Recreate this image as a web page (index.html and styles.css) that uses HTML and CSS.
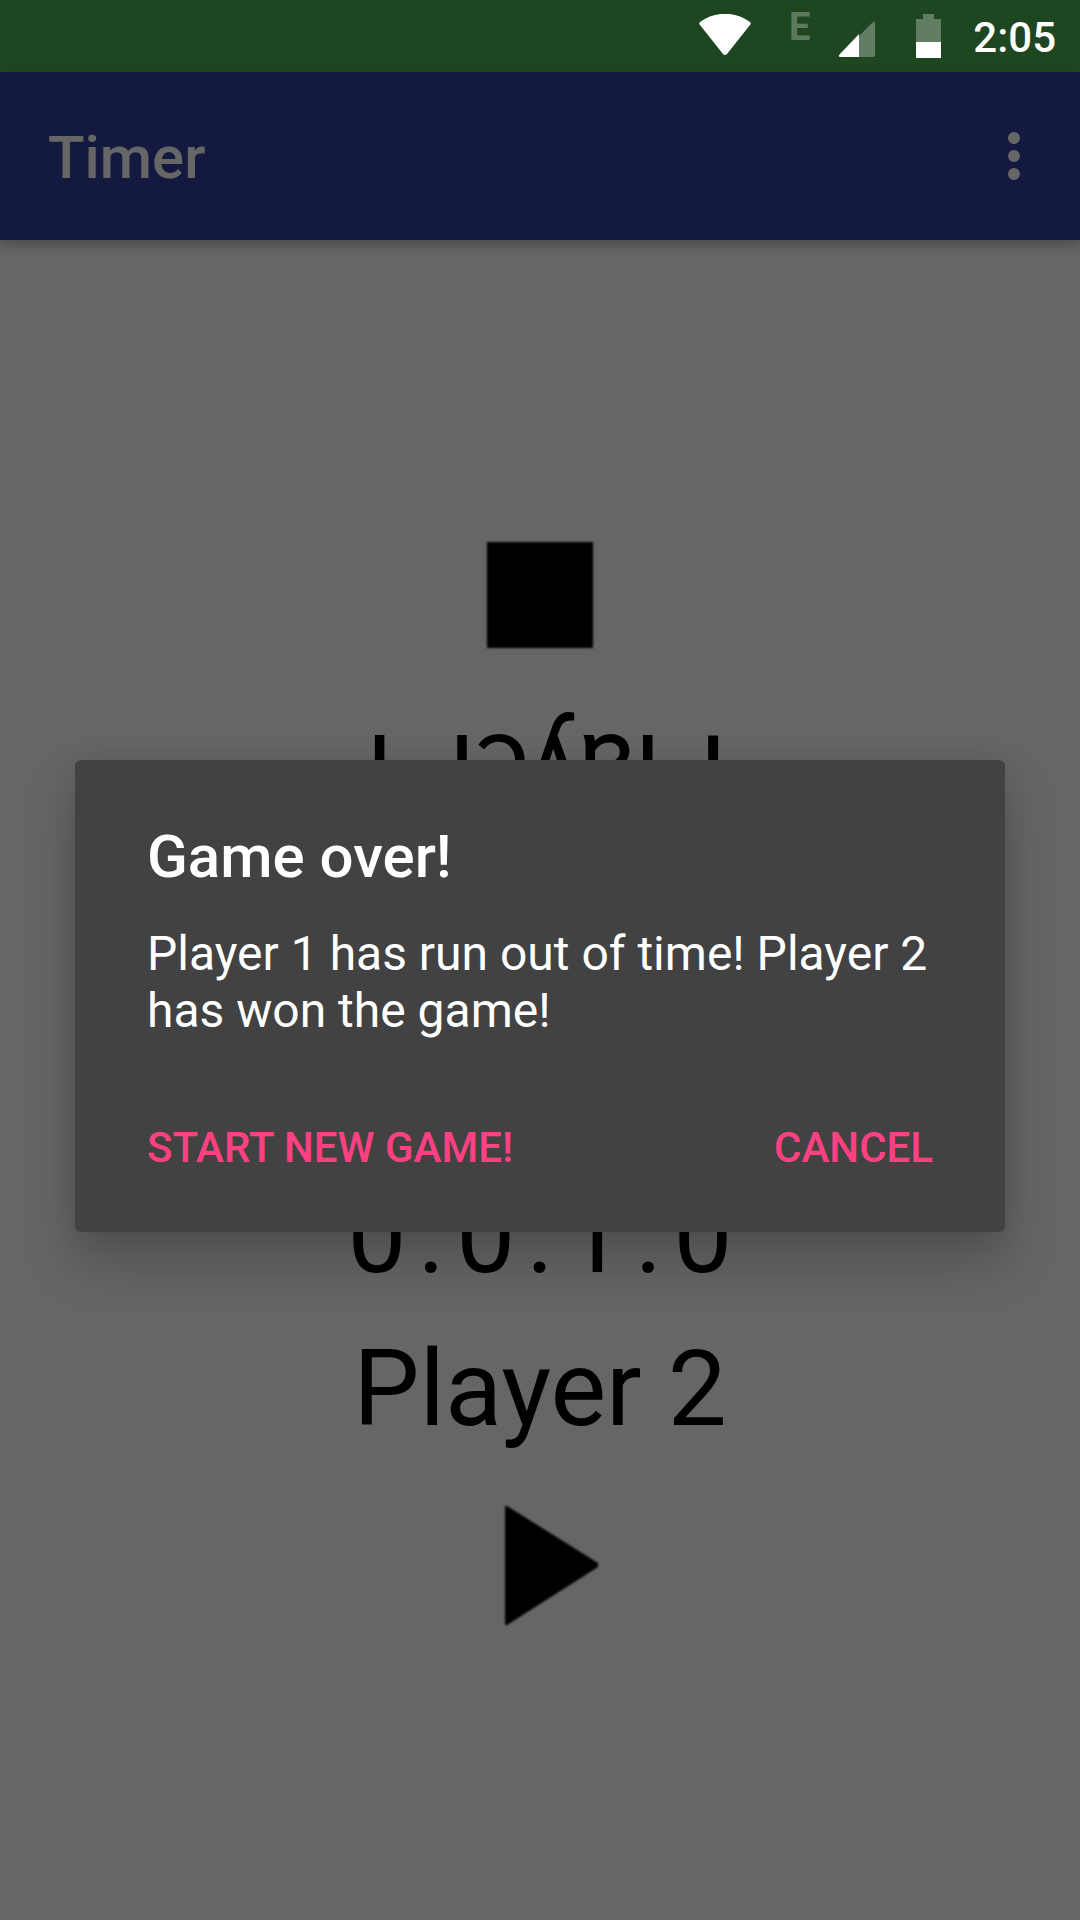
FILE: index.html
```html
<!DOCTYPE html>
<html lang="en">
<head>
<meta charset="utf-8">
<meta name="viewport" content="width=device-width, initial-scale=1">
<title>Timer</title>
<link rel="stylesheet" href="styles.css">
</head>
<body>
<div class="screen">
  <div class="status-bar">
    <svg class="status-wifi" viewBox="0 0 52 42" width="52" height="42" aria-hidden="true">
      <path fill="#fff" d="M1 11C0 10 0 9 1 8C16 -3 36 -3 51 8C52 9 52 10 51 11L28 40Q26 42 24 40Z"/>
    </svg>
    <span class="status-network">E</span>
    <svg class="status-signal" viewBox="0 0 38 38" width="38" height="38" aria-hidden="true">
      <path fill="#fff" fill-opacity=".3" d="M21 16L34 3Q37 0 37 4V35Q37 37 35 37H21Z"/>
      <path fill="#fff" d="M21 14V37H3Q-1 37 2 34Z"/>
    </svg>
    <svg class="status-battery" viewBox="0 0 25 44" width="25" height="44" aria-hidden="true">
      <path fill="#fff" fill-opacity=".3" d="M7 0H18V5H25V28H0V5H7Z"/>
      <path fill="#fff" d="M0 28H25V44H0Z"/>
    </svg>
    <time class="status-clock">2:05</time>
  </div>

  <div class="content">
    <header class="app-bar">
      <h1 class="app-title">Timer</h1>
      <button class="menu-button" type="button" aria-label="More options">
        <svg viewBox="0 0 12 48" width="12" height="48" fill="#fff" aria-hidden="true">
          <circle cx="6" cy="6" r="6"/><circle cx="6" cy="24" r="6"/><circle cx="6" cy="42" r="6"/>
        </svg>
      </button>
    </header>

    <main class="board">
      <section class="player player-flipped">
        <div class="clock"></div>
        <div class="player-name">Player 1</div>
        <button class="control" type="button" aria-label="Stop">
          <svg viewBox="0 0 168 168" width="168" height="168" aria-hidden="true"><path d="M31 31H137V137H31Z"/></svg>
        </button>
      </section>
      <section class="player">
        <div class="clock"><span>0</span><span>.</span><span>0</span><span>.</span><span>1</span><span>.</span><span>0</span></div>
        <div class="player-name">Player 2</div>
        <button class="control" type="button" aria-label="Play">
          <svg viewBox="0 0 168 168" width="168" height="168" aria-hidden="true"><path d="M49 25H51L142 82V86L51 144H49Z"/></svg>
        </button>
      </section>
    </main>
  </div>

  <div class="scrim">
    <div class="dialog" role="alertdialog" aria-labelledby="dialog-title" aria-describedby="dialog-text">
      <h2 class="dialog-title" id="dialog-title">Game over!</h2>
      <p class="dialog-text" id="dialog-text">Player 1 has run out of time! Player 2 has won the game!</p>
      <div class="dialog-actions">
        <button class="dialog-button" type="button">START NEW GAME!</button>
        <button class="dialog-button" type="button">CANCEL</button>
      </div>
    </div>
  </div>
</div>
</body>
</html>
```

FILE: styles.css
```css
* {
  box-sizing: border-box;
}

body {
  margin: 0;
  font-family: Roboto, "Noto Sans", sans-serif;
  background: #fff;
}

h1, h2, p {
  margin: 0;
}

button {
  margin: 0;
  padding: 0;
  border: 0;
  background: none;
  font-family: inherit;
  cursor: pointer;
}

svg {
  display: block;
}

.screen {
  position: relative;
  display: flex;
  flex-direction: column;
  min-height: 100vh;
}

/* Status bar */
.status-bar {
  display: flex;
  align-items: flex-start;
  justify-content: flex-end;
  height: 72px;
  padding: 0 24px;
  background: #1e4620;
  color: #fff;
}

.status-wifi {
  margin: 14px 38px 0 0;
}

.status-network {
  margin: 5px 28px 0 0;
  font-size: 38px;
  font-weight: 700;
  line-height: 44px;
  color: rgba(255, 255, 255, .3);
}

.status-signal {
  margin: 20px 40px 0 0;
}

.status-battery {
  margin: 14px 32px 0 0;
}

.status-clock {
  padding-top: 13px;
  font-size: 42px;
  font-weight: 500;
  line-height: 50px;
}

/* App content */
.content {
  display: flex;
  flex: 1;
  flex-direction: column;
}

.app-bar {
  display: flex;
  align-items: center;
  justify-content: space-between;
  height: 168px;
  padding: 0 24px 0 48px;
  background: #303f9f;
  color: #fff;
  box-shadow: 0 6px 12px rgba(0, 0, 0, .25);
}

.app-title {
  padding-top: 4px;
  font-size: 60px;
  font-weight: 500;
  line-height: 70px;
}

.menu-button {
  display: grid;
  place-items: center;
  width: 84px;
  height: 144px;
}

.board {
  display: grid;
  flex: 1;
  grid-template-rows: 1fr 1fr;
}

.player {
  display: flex;
  flex-direction: column;
  align-items: center;
  gap: 30px;
  padding-top: 95px;
  color: #000;
}

.player-flipped {
  transform: rotate(180deg);
}

.clock,
.player-name {
  min-height: 123px;
  font-size: 105px;
  line-height: 123px;
}

.clock {
  display: flex;
  gap: 11px;
}

.control svg {
  filter: blur(1px);
}

/* Dialog */
.scrim {
  position: absolute;
  inset: 72px 0 0;
  display: flex;
  align-items: center;
  padding: 0 75px;
  background: rgba(0, 0, 0, .6);
}

.dialog {
  flex: 1;
  padding: 62px 72px 30px;
  border-radius: 6px;
  background: #424242;
  color: #fff;
  box-shadow: 0 30px 54px rgba(0, 0, 0, .22), 0 0 24px rgba(0, 0, 0, .08);
}

.dialog-title {
  margin-bottom: 33px;
  font-size: 60px;
  font-weight: 500;
  line-height: 70px;
}

.dialog-text {
  margin-bottom: 55px;
  font-size: 48px;
  line-height: 57px;
}

.dialog-actions {
  display: flex;
  justify-content: space-between;
}

.dialog-button {
  height: 108px;
  font-size: 42px;
  font-weight: 500;
  line-height: 50px;
  color: #ff4081;
}
```
